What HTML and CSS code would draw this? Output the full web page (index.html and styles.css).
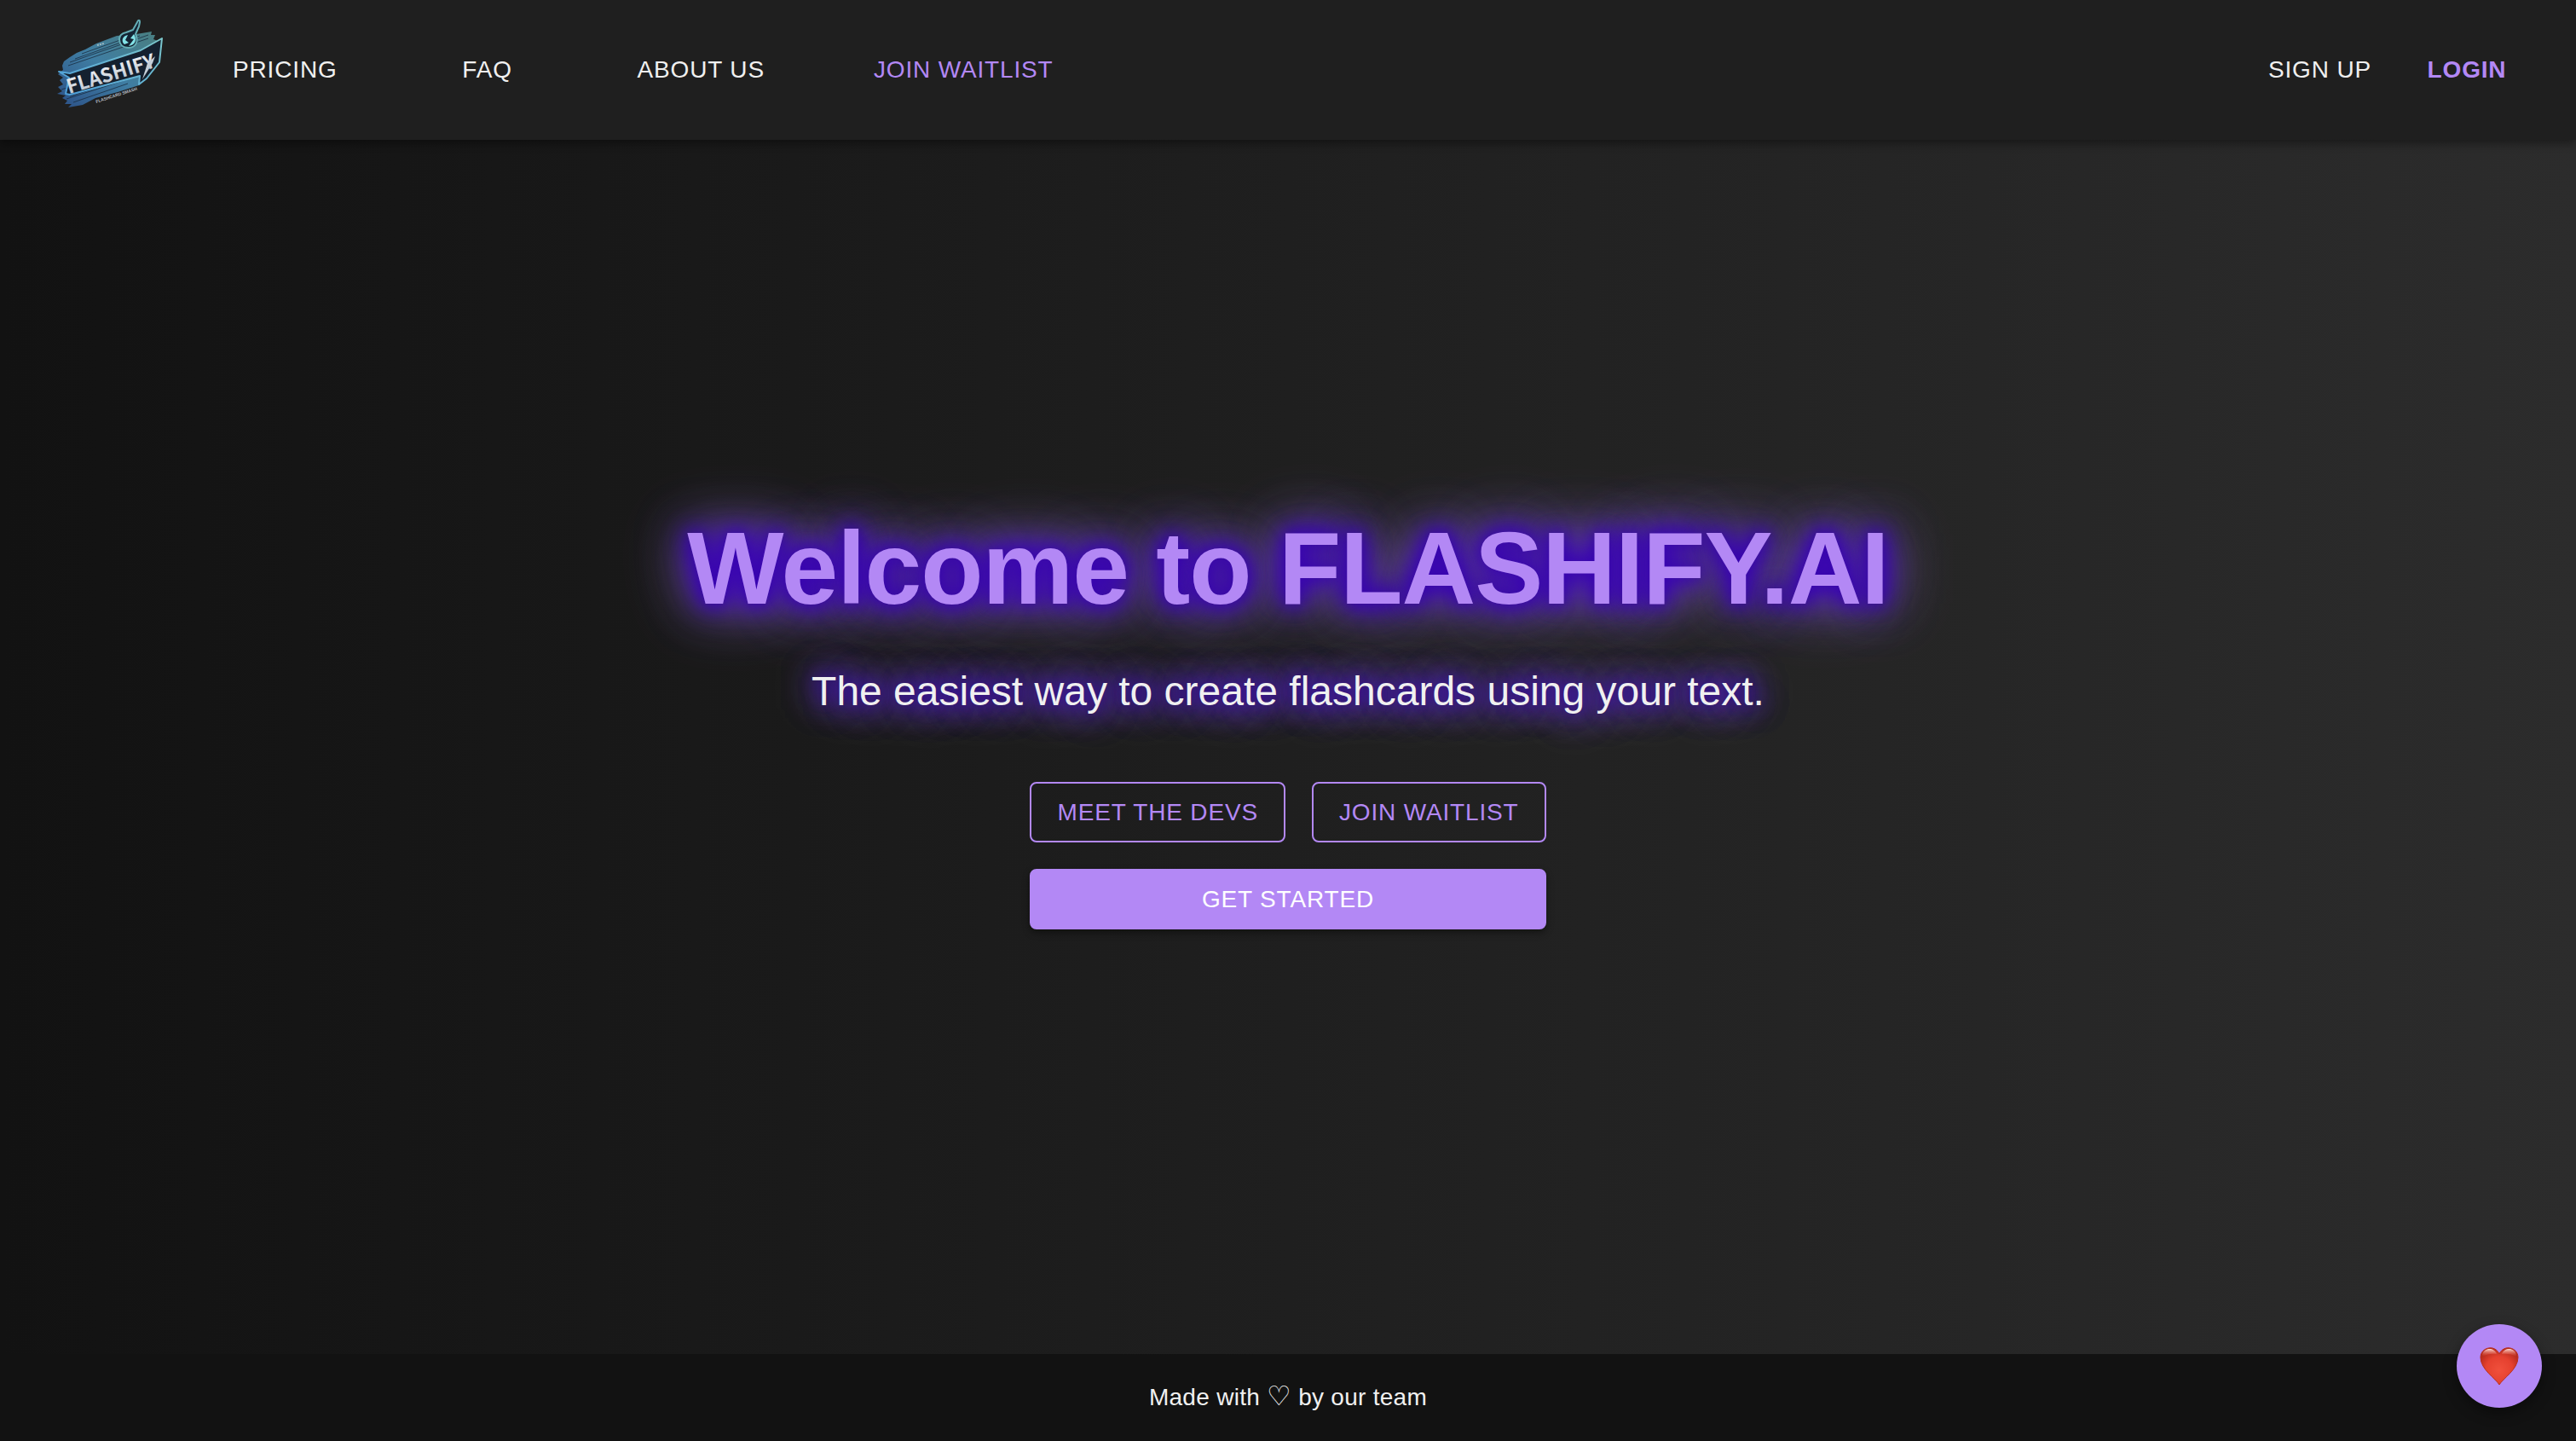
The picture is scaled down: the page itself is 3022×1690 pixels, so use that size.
FILE: index.html
```html
<!DOCTYPE html>
<html lang="en">
<head>
<meta charset="utf-8">
<title>Flashify.AI</title>
<link rel="stylesheet" href="styles.css">
</head>
<body>
<header class="navbar">
  <a class="logo" href="#" aria-label="Flashify home">
    <svg class="logo-art" viewBox="0 0 132 132" aria-hidden="true">
      <defs>
        <linearGradient id="brush" x1="0" y1="1" x2="1" y2="0">
          <stop offset="0" stop-color="#2b4f86"/>
          <stop offset=".5" stop-color="#3f7da2"/>
          <stop offset="1" stop-color="#4a7f80"/>
        </linearGradient>
        <linearGradient id="edge" x1="0" y1="1" x2="1" y2="0">
          <stop offset="0" stop-color="#4a9bd8"/>
          <stop offset="1" stop-color="#7cc8cc"/>
        </linearGradient>
        <linearGradient id="steel" x1="0" y1="0" x2="0" y2="1">
          <stop offset="0" stop-color="#ffffff"/>
          <stop offset="1" stop-color="#b4bec9"/>
        </linearGradient>
      </defs>
      <path d="M11 56L18 51 26 46 36 42 49 35 73 26 96 24 114 21 113 25 118 25 116 30 121 32 112 60 99 84 74 92 48 99 33 107 16 110 20 106 12 106 15 102 9 99 13 96 3 94 9 91 4 86 10 83 6 78 10 75 4 71 10 66 9 61z" fill="url(#brush)"/>
      <g stroke="#18293c" stroke-width="1" opacity=".75">
        <path d="M18 57L110 25M16 61L110 29M24 53L100 26M32 47L88 27M12 94L100 67M8 89L96 62M14 100L98 73M22 104L86 82M18 97L98 71"/>
      </g>
      <path d="M5 68l13 2 83-27 25-14-3 28-15 19-9 7 1-10-82 22-5-1 4-19z" fill="#14202f" stroke="url(#edge)" stroke-width="2" stroke-linejoin="round"/>
      <path d="M84 22l8-3 5-9c1-3 3-3 3 0l-1 5-4 9c4 9 0 16-8 16s-11-5-11-10c0-4 3-7 8-8z" fill="#142434" stroke="#64adb5" stroke-width="2" stroke-linejoin="round"/>
      <path d="M86 25c-7 1-8 8-4 11l5-2-4-3zM93 24l-4 5 4 1-6 8c8-1 10-8 6-14z" fill="#82e1e6"/>
      <text class="logo-name" x="17" y="94" transform="rotate(-17 17 94)" fill="url(#steel)">FLASHIFY</text>
      <path d="M118 50l-3 8-12 19 6-19z" fill="#c4ced8"/>
      <text class="logo-tag" x="49" y="105" transform="rotate(-18 49 105)">FLASHCARD SMASH</text>
      <path d="M50 37l8-2" stroke="#9db8c0" stroke-width="2" stroke-dasharray="2 1"/>
    </svg>
  </a>
  <nav class="links">
    <a class="link" href="#">PRICING</a>
    <a class="link" href="#">FAQ</a>
    <a class="link" href="#">ABOUT US</a>
    <a class="link accent" href="#">JOIN WAITLIST</a>
  </nav>
  <div class="account">
    <a class="link" href="#">SIGN UP</a>
    <a class="link accent strong" href="#">LOGIN</a>
  </div>
</header>
<main class="hero">
  <h1 class="title">Welcome to FLASHIFY.AI</h1>
  <p class="subtitle">The easiest way to create flashcards using your text.</p>
  <div class="actions">
    <button class="btn outlined" type="button">MEET THE DEVS</button>
    <button class="btn outlined" type="button">JOIN WAITLIST</button>
    <button class="btn filled" type="button">GET STARTED</button>
  </div>
</main>
<footer class="footer">Made with <span class="footer-heart">♡</span> by our team</footer>
<button class="fab" type="button" aria-label="Support us">
  <svg class="fab-heart" viewBox="0 0 46 46" aria-hidden="true">
    <defs>
      <radialGradient id="red" cx=".5" cy=".6" r=".6">
        <stop offset="0" stop-color="#f0503c"/>
        <stop offset=".6" stop-color="#e5412f"/>
        <stop offset="1" stop-color="#b52a1c"/>
      </radialGradient>
      <linearGradient id="shine" x1="0" y1="0" x2="0" y2="1">
        <stop offset="0" stop-color="#ffe0d8" stop-opacity=".95"/>
        <stop offset="1" stop-color="#f0604c" stop-opacity="0"/>
      </linearGradient>
    </defs>
    <path d="M23 45C19 38 1 27 1 13 1 1 18-3 23 9 28-3 45 1 45 13 45 27 27 38 23 45z" fill="url(#red)" stroke="#b8301f" stroke-width="1"/>
    <path d="M3 10C5 1 17 1 20 9 15 8 8 9 3 12zM43 10C41 1 29 1 26 9 31 8 38 9 43 12z" fill="url(#shine)"/>
  </svg>
</button>
</body>
</html>
```
FILE: styles.css
```css
* {
  box-sizing: border-box;
}

body {
  margin: 0;
  min-height: 100vh;
  display: flex;
  flex-direction: column;
  background: linear-gradient(90deg, #121212, #2c2c2c);
  color: #f0f0f0;
  font-family: "Liberation Sans", Arial, sans-serif;
  font-size: 28px;
}

.navbar {
  display: flex;
  align-items: center;
  padding: 16px 64px;
  background: #1f1f1f;
  box-shadow: 0 4px 10px rgba(0, 0, 0, 0.4);
}

.logo {
  display: block;
  margin-right: 61px;
}

.logo-art {
  display: block;
  width: 132px;
  height: 132px;
}

.logo-name {
  font: bold 23px "Noto Sans CJK JP", sans-serif;
}

.logo-tag {
  font: bold 5px "Liberation Sans", sans-serif;
  fill: #b4bcc4;
}

.links {
  display: flex;
  gap: 96px;
}

.account {
  display: flex;
  gap: 32px;
  margin-left: auto;
}

.link {
  min-width: 128px;
  padding: 12px 16px;
  color: inherit;
  letter-spacing: 0.03em;
  line-height: 48px;
  text-align: center;
  text-decoration: none;
}

.accent {
  color: #b388f5;
}

.strong {
  font-weight: bold;
}

.hero {
  flex: 1;
  display: flex;
  flex-direction: column;
  align-items: center;
  justify-content: center;
  padding-bottom: 68px;
  text-align: center;
}

.title {
  margin: 0 0 41px;
  color: #b388f5;
  font-size: 120px;
  line-height: 144px;
  letter-spacing: -1px;
  text-shadow: 0 0 20px #3700b3, 0 0 30px #3700b3, 0 0 40px #3c08b4, 0 0 60px #7a48d0, 0 0 80px #b898e8;
}

.subtitle {
  margin: 0 0 74px;
  font-size: 48px;
  line-height: 64px;
  text-shadow: 0 0 20px #3700b3, 0 0 40px #4a10d8, 0 0 40px #6a38e0, 0 0 60px #d0b0ff;
}

.actions {
  display: grid;
  grid-template-columns: auto auto;
  gap: 31px;
}

.btn {
  padding: 10px 30px;
  border: 2px solid #b388f5;
  border-radius: 8px;
  font: inherit;
  line-height: 47px;
  letter-spacing: 0.03em;
}

.outlined {
  background: transparent;
  color: #b388f5;
}

.filled {
  grid-column: 1 / -1;
  background: #b388f5;
  color: #fff;
  box-shadow: 0 4px 8px rgba(0, 0, 0, 0.4);
}

.footer {
  padding: 27px 32px;
  background: #121212;
  line-height: 48px;
  letter-spacing: 0.01em;
  text-align: center;
}

.footer-heart {
  font-family: "DejaVu Sans", sans-serif;
  font-size: 32px;
  line-height: 1;
}

.fab {
  position: fixed;
  right: 40px;
  bottom: 39px;
  width: 100px;
  height: 98px;
  display: grid;
  place-items: center;
  padding: 0;
  border: 0;
  border-radius: 50%;
  background: #b388f5;
  box-shadow: 0 6px 16px rgba(0, 0, 0, 0.4);
}

.fab-heart {
  width: 46px;
  height: 46px;
}
```
